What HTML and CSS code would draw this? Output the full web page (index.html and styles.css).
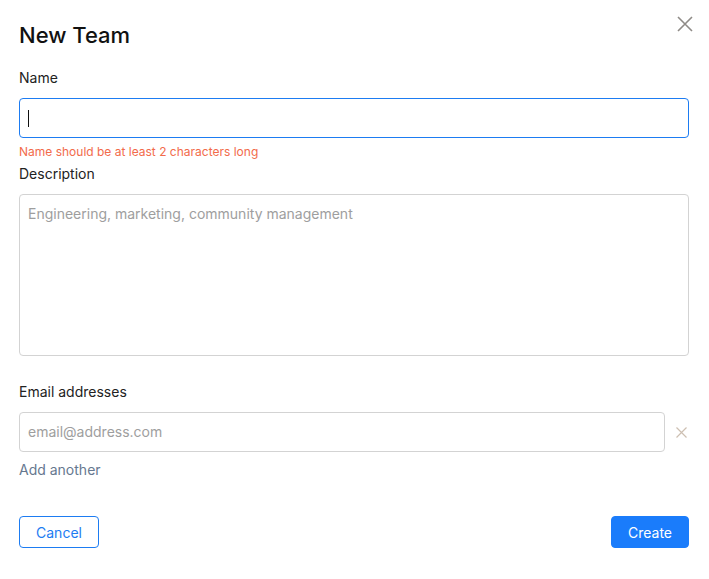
FILE: index.html
```html
<!DOCTYPE html>
<html lang="en">
<head>
<meta charset="utf-8">
<title>New Team</title>
<link rel="stylesheet" href="styles.css">
</head>
<body>
<div class="dialog">
  <button class="close" aria-label="Close">
    <svg width="16" height="16" viewBox="0 0 16 16"><path d="M1 1L15 15M15 1L1 15" stroke="#8f8b87" stroke-width="1.6" fill="none"/></svg>
  </button>
  <h1 class="title">New Team</h1>
  <div class="field">
    <label class="label">Name</label>
    <div class="input focus"><span class="caret"></span></div>
    <div class="error">Name should be at least 2 characters long</div>
  </div>
  <div class="field">
    <label class="label">Description</label>
    <div class="textarea"><span class="placeholder">Engineering, marketing, community management</span></div>
  </div>
  <div class="field emails">
    <label class="label">Email addresses</label>
    <div class="email-row">
      <div class="input grow"><span class="placeholder">email@address.com</span></div>
      <button class="remove" aria-label="Remove">
        <svg width="11" height="11" viewBox="0 0 11 11"><path d="M0.5 0.5L10.5 10.5M10.5 0.5L0.5 10.5" stroke="#cdbfb2" stroke-width="1.2" fill="none"/></svg>
      </button>
    </div>
    <div class="add">Add another</div>
  </div>
  <div class="actions">
    <button class="btn cancel">Cancel</button>
    <button class="btn create">Create</button>
  </div>
</div>
</body>
</html>
```
FILE: styles.css
```css
* { box-sizing: border-box; }
html, body { margin: 0; padding: 0; background: #fff; }
body { font-family: Inter, "Noto Sans", sans-serif; color: #1b1b1f; }
.dialog { position: relative; padding: 20px 20px 0 19px; }
.close { position: absolute; top: 16px; right: 16px; background: none; border: 0; padding: 0; width: 16px; height: 16px; }
.close svg { display: block; }
.title { margin: 0; font-size: 22px; font-weight: 500; line-height: 30px; color: #111; }
.field { display: flex; flex-direction: column; }
.label { font-size: 14px; line-height: 20px; margin-top: 18px; margin-bottom: 10px; color: #222; }
.field + .field .label { margin-top: 3px; }
.input { height: 40px; border: 1px solid #d3d3d3; border-radius: 4px; display: flex; align-items: center; padding: 0 8px; }
.input.grow { flex: 1; }
.input.focus { border-color: #1d7cf2; }
.caret { width: 1px; height: 17px; background: #111; }
.error { font-size: 12px; line-height: 18px; color: #f26b4b; margin-top: 5px; }
.textarea { height: 162px; border: 1px solid #d3d3d3; border-radius: 4px; padding: 8px 8px; }
.placeholder { font-size: 14px; line-height: 18px; color: #9e9e9e; }
.field + .field.emails .label { margin-top: 26px; }
.email-row { display: flex; align-items: center; gap: 11px; }
.remove { background: none; border: 0; padding: 0; width: 13px; height: 11px; display: flex; }
.add { font-size: 14px; line-height: 20px; margin-top: 8px; color: #66788f; }
.actions { display: flex; justify-content: space-between; margin-top: 36px; }
.btn { height: 32px; border-radius: 4px; font-family: Inter, "Noto Sans", sans-serif; font-size: 14px; padding: 0; }
.cancel { width: 80px; background: #fff; border: 1px solid #1d7cf2; color: #1d7cf2; }
.create { width: 78px; background: #1a7cfb; border: 1px solid #1a7cfb; color: #fff; }
```
